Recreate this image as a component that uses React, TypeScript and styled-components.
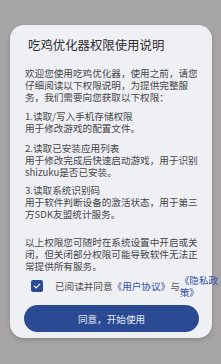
import styled, { createGlobalStyle } from 'styled-components';
import { useState } from 'react';

const GlobalStyle = createGlobalStyle`
  html, body {
    margin: 0;
    padding: 0;
    background: #a7a4a7;
  }
  body {
    font-family: 'Noto Sans CJK SC', 'Noto Sans', sans-serif;
  }
`;

const paragraphs: { text: string; gap: number }[] = [
  {
    text: '欢迎您使用吃鸡优化器，使用之前，请您仔细阅读以下权限说明，为提供完整服务，我们需要向您获取以下权限：',
    gap: 0,
  },
  { text: '1.读取/写入手机存储权限\n用于修改游戏的配置文件。', gap: 7 },
  { text: '2.读取已安装应用列表\n用于修改完成后快速启动游戏，用于识别shizuku是否已安装。', gap: 8 },
  { text: '3.读取系统识别码\n用于软件判断设备的激活状态，用于第三方SDK友盟统计服务。', gap: 6 },
  {
    text: '以上权限您可随时在系统设置中开启或关闭，但关闭部分权限可能导致软件无法正常提供所有服务。',
    gap: 16,
  },
];

export default function App() {
  const [agreed, setAgreed] = useState(true);

  return (
    <>
      <GlobalStyle />
      <Screen>
        <Dialog>
          <Title>吃鸡优化器权限使用说明</Title>
          <Body>
            {paragraphs.map((p, idx) => (
              <Paragraph key={idx} $gap={p.gap}>
                {p.text}
              </Paragraph>
            ))}
          </Body>
          <AgreeRow>
            <CheckBox $checked={agreed} onClick={() => setAgreed(!agreed)}>
              {agreed && (
                <svg width="8" height="8" viewBox="0 0 10 10">
                  <path
                    d="M1.6 5.2 L4 7.4 L8.4 2.6"
                    fill="none"
                    stroke="#ffffff"
                    strokeWidth="1.5"
                    strokeLinecap="round"
                    strokeLinejoin="round"
                  />
                </svg>
              )}
            </CheckBox>
            <AgreeText>已阅读并同意</AgreeText>
            <LinkText>《用户协议》</LinkText>
            <AgreeText>与</AgreeText>
            <LinkText $wrap>《隐私政策》</LinkText>
          </AgreeRow>
          <ConfirmBtn>同意，开始使用</ConfirmBtn>
        </Dialog>
      </Screen>
    </>
  );
}

const Screen = styled.div`
  box-sizing: border-box;
  width: 221px;
  height: 364px;
  padding: 25px 0 0 10px;
  background: #a7a4a7;
`;

const Dialog = styled.div`
  box-sizing: border-box;
  width: 202px;
  height: 313px;
  padding: 12px 13px 6px 14px;
  display: flex;
  flex-direction: column;
  background: #eef0f4;
  border-radius: 14px;
  box-shadow: 0 2px 4px rgba(0, 0, 0, 0.18);
`;

const Title = styled.div`
  margin-left: 4px;
  font-size: 12.4px;
  line-height: 16px;
  height: 16px;
  color: #2e2e30;
  white-space: nowrap;
`;

const Body = styled.div`
  margin: 14px 0 0 1px;
  width: 176px;
  font-size: 9.6px;
  line-height: 12px;
  color: #47474a;
  line-break: strict;
`;

const Paragraph = styled.div<{ $gap: number }>`
  margin-top: ${({ $gap }) => $gap}px;
  white-space: pre-line;
`;

const AgreeRow = styled.div`
  display: flex;
  align-items: center;
  height: 24px;
  margin: 2px 0 0 7px;
`;

const CheckBox = styled.button<{ $checked: boolean }>`
  flex: none;
  width: 12px;
  height: 12px;
  margin-right: 12px;
  padding: 0;
  display: flex;
  align-items: center;
  justify-content: center;
  border: ${({ $checked }) => ($checked ? 'none' : '1px solid #2b4b92')};
  border-radius: 2px;
  background: ${({ $checked }) => ($checked ? '#2b4b92' : 'transparent')};
  cursor: pointer;
`;

const AgreeText = styled.span`
  flex: none;
  font-size: 9.6px;
  line-height: 12px;
  color: #505052;
  white-space: nowrap;
`;

const LinkText = styled.span<{ $wrap?: boolean }>`
  flex: none;
  font-size: 9.6px;
  line-height: 12px;
  color: #3551a6;
  white-space: ${({ $wrap }) => ($wrap ? 'normal' : 'nowrap')};
  width: ${({ $wrap }) => ($wrap ? '39px' : 'auto')};
`;

const ConfirmBtn = styled.button`
  margin-top: 7px;
  width: 175px;
  height: 28px;
  padding: 0;
  border: none;
  border-radius: 14px;
  background: #2a4b94;
  color: #e4e9f4;
  font-family: 'Noto Sans CJK SC', 'Noto Sans', sans-serif;
  font-size: 9.6px;
  cursor: pointer;
`;
